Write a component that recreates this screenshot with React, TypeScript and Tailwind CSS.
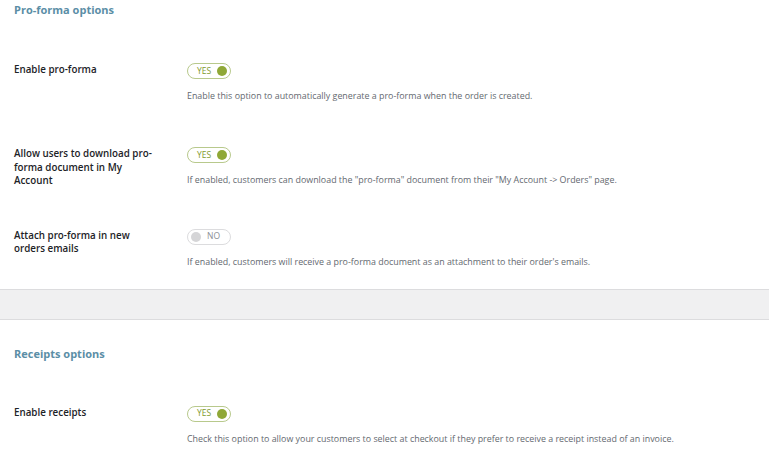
import React from 'react'

type Row = {
  label: string
  on: boolean
  help: string
  gap: string
}

function Toggle({ on }: { on: boolean }) {
  if (on) {
    return (
      <div className="flex h-4 w-[44px] items-center justify-between rounded-full border border-[#b8c98c] bg-white pl-[9px] pr-[3px]">
        <span className="text-[8.5px] leading-none text-[#7f9a2e]">YES</span>
        <span className="h-[10px] w-[10px] rounded-full bg-[#8fa837]" />
      </div>
    )
  }
  return (
    <div className="flex h-4 w-[44px] items-center justify-between rounded-full border border-[#dcdcde] bg-white pl-[3px] pr-[10px]">
      <span className="h-[10px] w-[10px] rounded-full bg-[#d5d5d7]" />
      <span className="text-[8.5px] leading-none text-[#8c8f94]">NO</span>
    </div>
  )
}

function OptionRow({ row }: { row: Row }) {
  return (
    <div className={`flex ${row.gap}`}>
      <div className="w-[173px] shrink-0 pr-[30px] text-[9.8px] font-semibold leading-[13.5px] text-[#1d2327]">
        {row.label}
      </div>
      <div>
        <Toggle on={row.on} />
        <p className="mt-[11px] text-[8.9px] leading-[12px] text-[#646970]">{row.help}</p>
      </div>
    </div>
  )
}

const proforma: Row[] = [
  {
    label: 'Enable pro-forma',
    on: true,
    help: 'Enable this option to automatically generate a pro-forma when the order is created.',
    gap: '',
  },
  {
    label: 'Allow users to download pro-forma document in My Account',
    on: true,
    help: 'If enabled, customers can download the "pro-forma" document from their "My Account -> Orders" page.',
    gap: 'mt-[45px]',
  },
  {
    label: 'Attach pro-forma in new orders emails',
    on: false,
    help: "If enabled, customers will receive a pro-forma document as an attachment to their order's emails.",
    gap: 'mt-[41px]',
  },
]

const receipts: Row = {
  label: 'Enable receipts',
  on: true,
  help: 'Check this option to allow your customers to select at checkout if they prefer to receive a receipt instead of an invoice.',
  gap: '',
}

export default function App() {
  return (
    <div className="h-[452px] w-[769px] overflow-hidden bg-white font-['Open_Sans',sans-serif]">
      <section className="px-[14px] pb-[21px] pt-[3px]">
        <h2 className="text-[11px] font-bold leading-[14px] text-[#5b8ea6]">Pro-forma options</h2>
        <div className="mt-[46px]">
          {proforma.map((r) => (
            <OptionRow key={r.label} row={r} />
          ))}
        </div>
      </section>

      <div className="h-[31px] border-y border-[#dcdcde] bg-[#f0f0f1]" />

      <section className="px-[14px] pt-[27px]">
        <h2 className="text-[11px] font-bold leading-[14px] text-[#5b8ea6]">Receipts options</h2>
        <div className="mt-[45px]">
          <OptionRow row={receipts} />
        </div>
      </section>
    </div>
  )
}
